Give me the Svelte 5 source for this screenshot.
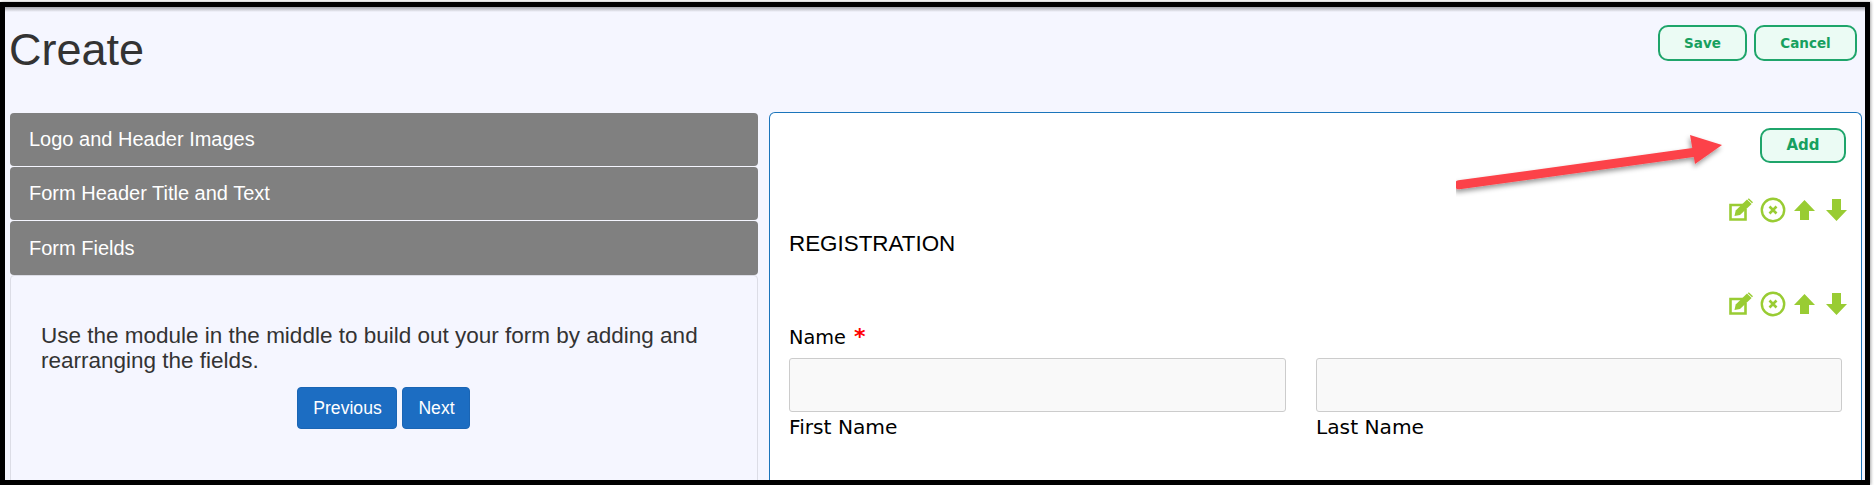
<script>
  const sections = ['Logo and Header Images', 'Form Header Title and Text', 'Form Fields'];
</script>

{#snippet tools()}
  <div class="tools">
    <svg class="edit" viewBox="0 0 24 24" aria-hidden="true">
      <path d="M14.5 7H1.5v14.5h15V11" fill="none" stroke="currentColor" stroke-width="2.6" />
      <path d="M5.5 18l1.2-5.5L18 1.5l4.6 4.4L11 17z" fill="currentColor" />
      <path d="M19.8 0.2L24 4.2l-1 1L18.8 1.2z" fill="currentColor" />
    </svg>
    <svg class="cancel" viewBox="0 0 26 26" aria-hidden="true">
      <circle cx="13" cy="13" r="11.2" fill="none" stroke="currentColor" stroke-width="2.4" />
      <path d="M9.5 9.5l7 7M16.5 9.5l-7 7" fill="none" stroke="currentColor" stroke-width="2.6" />
    </svg>
    <svg class="arrow" viewBox="0 0 21 22" aria-hidden="true">
      <path d="M10.5 1L21 12h-6v9H6v-9H0z" fill="currentColor" />
    </svg>
    <svg class="arrow" viewBox="0 0 21 22" aria-hidden="true">
      <path d="M6 0h9v11h6L10.5 22 0 11h6z" fill="currentColor" />
    </svg>
  </div>
{/snippet}

<div class="frame">
  <header class="head">
    <h1>Create</h1>
    <div class="actions">
      <button class="outline save">Save</button>
      <button class="outline cancel-btn">Cancel</button>
    </div>
  </header>

  <div class="columns">
    <aside class="left">
      {#each sections as s}
        <div class="section">{s}</div>
      {/each}
      <div class="body">
        <p>Use the module in the middle to build out your form by adding and rearranging the fields.</p>
        <div class="nav">
          <button class="blue prev">Previous</button>
          <button class="blue next">Next</button>
        </div>
      </div>
    </aside>

    <main class="panel">
      <div class="add-row">
        <button class="outline add">Add</button>
      </div>
      <div class="first-tools">{@render tools()}</div>
      <div class="reg">REGISTRATION</div>
      <div class="second-tools">{@render tools()}</div>
      <div class="name">Name <span class="req">*</span></div>
      <div class="fields">
        <div>
          <div class="input"></div>
          <div class="sub">First Name</div>
        </div>
        <div>
          <div class="input"></div>
          <div class="sub">Last Name</div>
        </div>
      </div>
    </main>
  </div>

  <svg class="pointer" viewBox="0 0 280 65" aria-hidden="true">
    <defs>
      <filter id="sh" x="-10%" y="-30%" width="120%" height="170%">
        <feDropShadow dx="-1" dy="3" stdDeviation="2.5" flood-color="#000" flood-opacity="0.4" />
      </filter>
    </defs>
    <g filter="url(#sh)" fill="#fc4349">
      <path d="M3 52.8L237 20.5" stroke="#fc4349" stroke-width="9" stroke-linecap="round" fill="none" />
      <path d="M234 3L266 13 239 32z" />
    </g>
  </svg>
</div>

<style>
  :global(body) {
    margin: 0;
    background: #fff;
  }

  .frame {
    position: relative;
    box-sizing: border-box;
    width: 1870px;
    height: 483px;
    margin-top: 2px;
    border: 5px solid #000;
    background: #f5f6ff;
    overflow: hidden;
    font-family: 'Liberation Sans', Arial, sans-serif;
    box-shadow: 1px 0 3px rgba(0, 0, 0, 0.35);
  }

  .frame::before {
    content: '';
    position: absolute;
    inset: 0 0 auto 0;
    height: 5px;
    background: linear-gradient(#a6a7ae, #f5f6ff);
  }

  .head {
    display: flex;
    justify-content: space-between;
    align-items: flex-start;
    height: 105px;
    box-sizing: border-box;
    padding: 18px 8px 0 4px;
  }

  h1 {
    margin: 0;
    font-size: 45px;
    line-height: 50px;
    font-weight: 400;
    color: #333;
  }

  .actions {
    display: flex;
    gap: 7px;
  }

  .outline {
    box-sizing: border-box;
    height: 36px;
    padding: 0 0 1px;
    border: 2px solid #1fa56b;
    border-radius: 10px;
    background: #ebfbf4;
    color: #17a05f;
    font-family: 'DejaVu Sans', Verdana, sans-serif;
    font-size: 13.5px;
    font-weight: 700;
  }

  .save { width: 89px; }
  .cancel-btn { width: 103px; }
  .add { width: 86px; height: 35px; margin-right: 1px; font-size: 15px; }

  .columns {
    display: grid;
    grid-template-columns: 748px 1093px;
    column-gap: 11px;
    padding-left: 5px;
  }

  .left {
    margin-top: 1px;
    display: flex;
    flex-direction: column;
    gap: 1px;
  }

  .section {
    box-sizing: border-box;
    height: 53px;
    padding-left: 19px;
    background: #808080;
    border-radius: 4px;
    color: #fff;
    font-size: 20px;
    line-height: 52px;
  }

  .section:nth-child(3) {
    height: 54px;
    line-height: 54px;
  }

  .body {
    box-sizing: border-box;
    height: 300px;
    margin-top: -1px;
    padding: 47px 30px 0;
    border: 1px solid #dcdde6;
    border-radius: 4px 4px 0 0;
  }

  .body p {
    margin: 0;
    font-size: 22.5px;
    line-height: 25px;
    color: #333;
  }

  .nav {
    display: flex;
    justify-content: center;
    gap: 5px;
    margin-top: 14px;
    padding-right: 2px;
  }

  .blue {
    box-sizing: border-box;
    height: 42px;
    padding: 0 0 0 2px;
    border: 1px solid #1a65b4;
    border-radius: 4px;
    background: #1c6dc2;
    color: #fff;
    font-family: 'Liberation Sans', Arial, sans-serif;
    font-size: 17.6px;
  }

  .prev { width: 100px; }
  .next { width: 68px; }

  .panel {
    box-sizing: border-box;
    height: 370px;
    padding: 15px 14px 0 19px;
    background: #fff;
    border: 1px solid #1b75bb;
    border-bottom: 0;
    border-radius: 6px 6px 0 0;
  }

  .add-row {
    display: flex;
    justify-content: flex-end;
  }

  .first-tools { margin-top: 34px; }
  .second-tools { margin-top: 34px; }

  .tools {
    display: flex;
    justify-content: flex-end;
    align-items: center;
    height: 25px;
    color: #99cc33;
  }

  .edit { width: 24px; height: 24px; margin-right: 7px; }
  .cancel { width: 26px; height: 26px; margin-right: 8px; }
  .arrow { width: 21px; height: 22px; }
  .arrow + .arrow { margin-left: 11px; }

  .reg {
    margin-top: 9px;
    font-size: 22.4px;
    line-height: 26px;
    color: #000;
  }

  .name,
  .sub {
    font-family: 'DejaVu Sans', Verdana, sans-serif;
    line-height: 24px;
    color: #000;
  }

  .name { margin-top: 10px; font-size: 19.3px; }
  .req { color: #f00; font-weight: 700; font-size: 22px; line-height: 20px; margin-left: 2px; }
  .sub { margin-top: 3px; font-size: 20.2px; }

  .fields {
    display: grid;
    grid-template-columns: 497px 526px;
    column-gap: 30px;
    margin-top: 8px;
  }

  .input {
    box-sizing: border-box;
    height: 54px;
    background: #f9f9f9;
    border: 1px solid #ccc;
    border-radius: 3px;
  }

  .pointer {
    position: absolute;
    left: 1451px;
    top: 125px;
    width: 280px;
    height: 65px;
  }
</style>
